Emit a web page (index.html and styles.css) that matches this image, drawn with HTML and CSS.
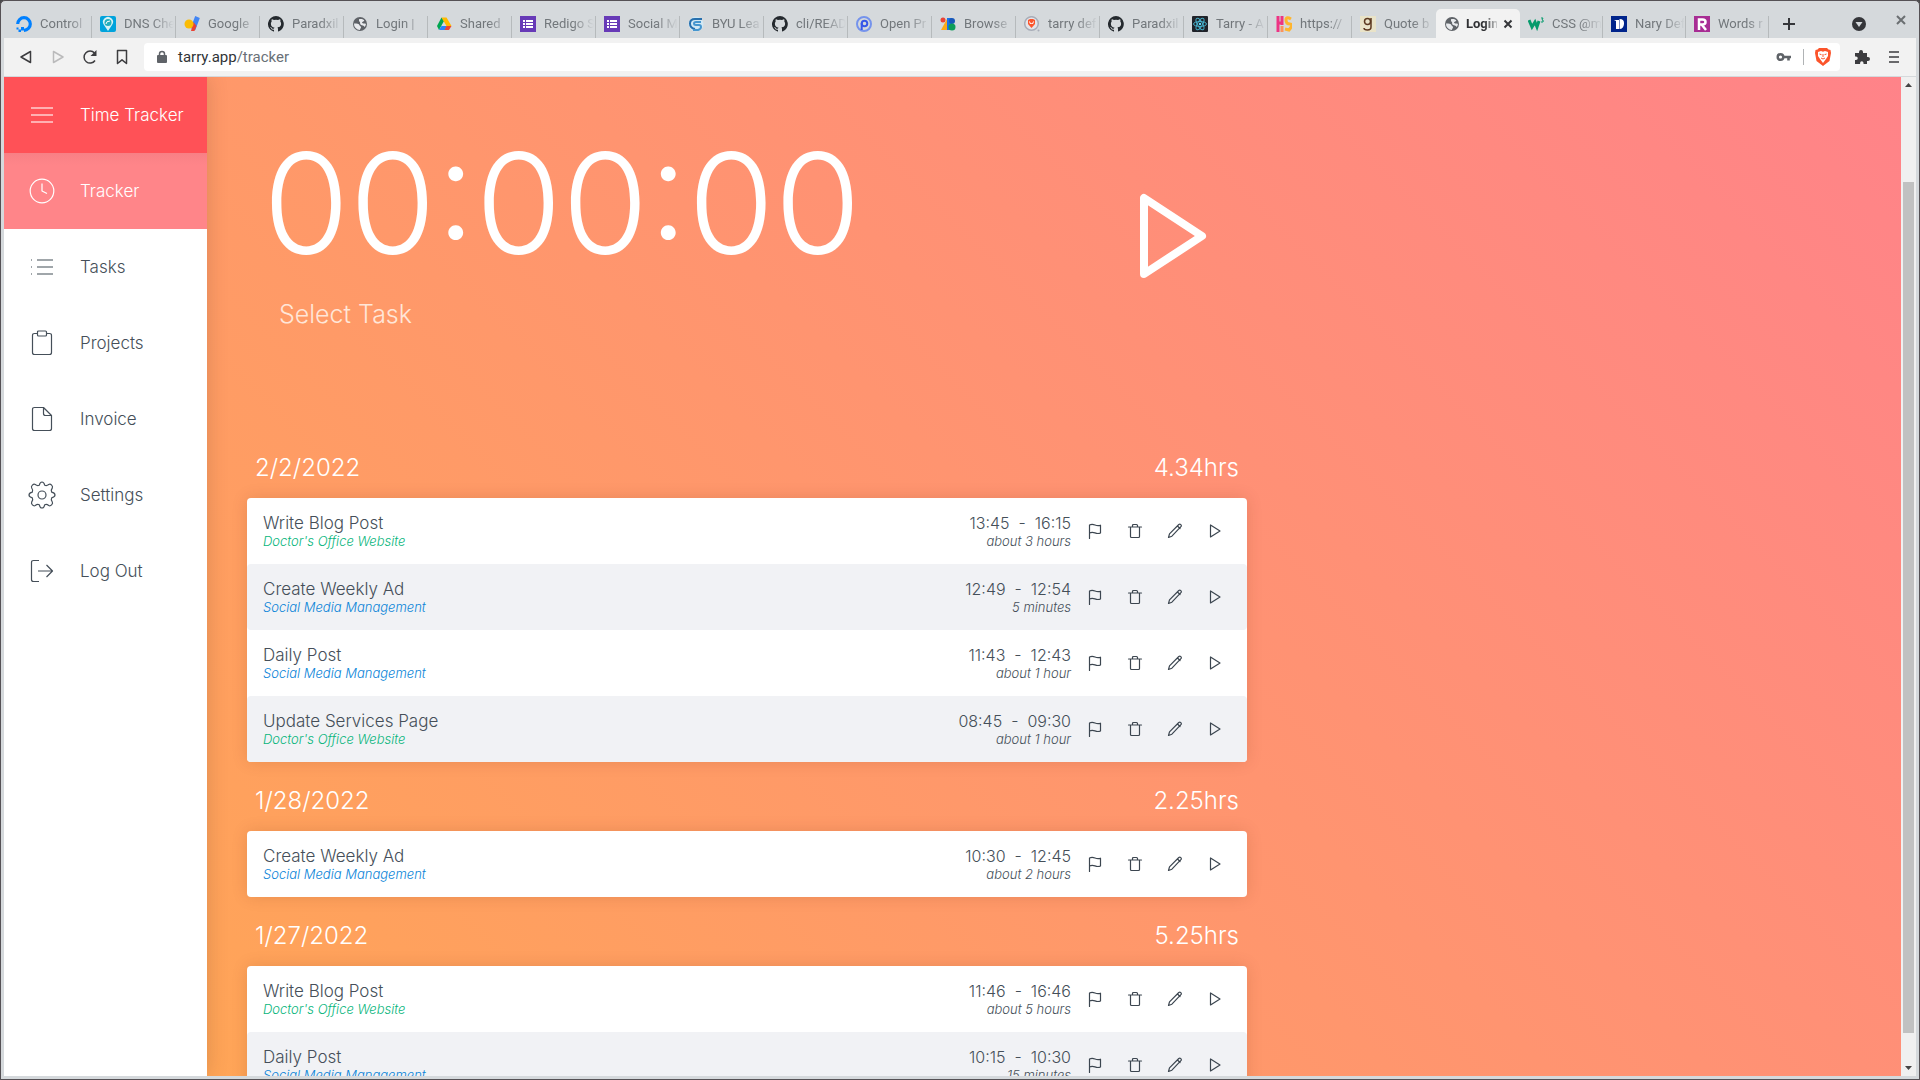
FILE: index.html
```html
<!DOCTYPE html>
<html lang="en">
<head>
<meta charset="utf-8">
<title>Time Tracker</title>
<link rel="stylesheet" href="styles.css">
</head>
<body>
<svg class="sprite" aria-hidden="true">
  <symbol id="flag" viewBox="0 0 16 16"><path d="M2.5 15.5V2Q5 .8 8 2t5.500 .2V10Q11 11 8 9.900T2.500 10"/></symbol>
  <symbol id="trash" viewBox="0 0 16 16"><path d="M1.500 4h13M3.500 4v9.500q0 1 1 1h7q1 0 1-1V4M5.500 4V2.500q0-1 1-1h3q1 0 1 1V4"/></symbol>
  <symbol id="pencil" viewBox="0 0 16 16"><path d="M1.500 14.500l1-3.700L11.800 1.500q1-.8 2 .1 1 1 .1 2.100L4.900 13.200zM10.500 3l2.500 2.500"/></symbol>
  <symbol id="play" viewBox="0 0 16 16"><path d="M3.500 2v12l9.500-6z"/></symbol>
  <symbol id="github" viewBox="0 0 16 16"><path fill="#24292e" d="M8 0a8 8 0 0 0-2.500 15.600c.4.1.5-.2.5-.4v-1.500c-2.200.5-2.700-.9-2.700-.9-.4-.9-.9-1.200-.9-1.200-.7-.5.1-.5.1-.5.8.1 1.200.8 1.200.8.7 1.300 1.900.9 2.300.7.100-.5.3-.9.5-1.100-1.800-.2-3.600-.9-3.600-4 0-.9.300-1.600.8-2.100-.1-.2-.4-1 .1-2.100 0 0 .7-.2 2.200.8a7.600 7.600 0 0 1 4 0c1.500-1 2.200-.8 2.200-.8.4 1.100.2 1.900.1 2.100.5.6.8 1.300.8 2.100 0 3.100-1.900 3.700-3.700 3.900.3.300.6.8.6 1.500v2.200c0 .2.100.5.600.4A8 8 0 0 0 8 0z"/></symbol>
  <symbol id="globe" viewBox="0 0 16 16"><circle cx="8" cy="8" r="7" fill="#5f6368"/><path fill="#e8eaed" d="M2 7.500c3 .1 5 0 5.500 1.800.3 1.200 1.500.5 1.500 1.900 0 1-1 1.300-1 2.800A6 6 0 0 1 2 7.500zM7 3.200c1.500-.4 4-.2 5.300 1.200-.7 1.300-1.800 1-2.300 2-.4 1 2.800 1 4 1.300-.1 1.500-.8 2.600-1.400 3.200-.7-1.700-2.700-1.100-3.800-2.200C7.300 7.200 9 5.500 7 5.400z"/></symbol>
  <symbol id="forms" viewBox="0 0 16 16"><path fill="#673ab7" d="M0 0h16v16H0z"/><path stroke="#fff" stroke-width="2" d="M3 5h2M6 5h7M3 8h2M6 8h7M3 11h2M6 11h7"/></symbol>
</svg>
<div class="window">
  <header class="tabs">
    <div class="tab"><svg viewBox="0 0 16 16"><path fill="none" stroke="#0080ff" stroke-width="3.200" d="M1.700 8A6.300 6.300 0 1 1 8 14.300"/><path fill="#0080ff" d="M5 11h3v3.500H5zM2.500 13.500H5V16H2.500zM.5 11.500h2v2h-2z"/></svg><span>Control</span></div>
    <div class="tab"><svg viewBox="0 0 16 16"><rect width="16" height="16" rx="2" fill="#00a3dc"/><path fill="#d8f2f5" d="M8 15L4 9a5 5 0 1 1 8 0z"/><circle cx="8" cy="6.500" r="3.500" fill="#25aebb"/><path fill="none" stroke="#fff" d="M6 8q0-3 4-3"/></svg><span>DNS Che</span></div>
    <div class="tab"><svg viewBox="0 0 16 16"><path stroke="#4285f4" stroke-width="5" d="M13.500 1L9 13"/><path fill="#ea4335" d="M9.500 6l3 4-2 5H7z"/><circle cx="5" cy="8" r="4.500" fill="#fbbc04"/></svg><span>Google</span></div>
    <div class="tab"><svg><use href="#github"/></svg><span>Paradxil</span></div>
    <div class="tab"><svg><use href="#globe"/></svg><span>Login |</span></div>
    <div class="tab"><svg viewBox="0 0 16 16"><path fill="#00a650" d="M5.500 1.500L1 10l2 4 5-9z"/><path fill="#ffba00" d="M5.500 1.500h5L15.500 10h-5z"/><path fill="#2684fc" d="M3 14l2.500-4H11l-2 4z"/><path fill="#ea4335" d="M10.500 10h5l-2.500 4H8.500z"/></svg><span>Shared</span></div>
    <div class="tab"><svg><use href="#forms"/></svg><span>Redigo S</span></div>
    <div class="tab"><svg><use href="#forms"/></svg><span>Social M</span></div>
    <div class="tab"><svg viewBox="0 0 16 16"><circle cx="8" cy="8" r="7.500" fill="#d2e8f4"/><path fill="none" stroke="#2870ae" stroke-width="2" d="M14 3H7Q2 3 2 7.500T7 13"/><path fill="none" stroke="#4696cf" stroke-width="2" d="M13 6H8Q6 6 6 7.500T8 9h3q2 0 2 2t-3 3H5"/></svg><span>BYU Lea</span></div>
    <div class="tab"><svg><use href="#github"/></svg><span>cli/READ</span></div>
    <div class="tab"><svg viewBox="0 0 16 16"><circle cx="8" cy="8" r="7" fill="none" stroke="#7593ec" stroke-width="2"/><circle cx="8.500" cy="7.500" r="2.800" fill="none" stroke="#3858e8" stroke-width="2"/><path stroke="#3858e8" stroke-width="2" d="M5.700 7v7"/></svg><span>Open Pr</span></div>
    <div class="tab"><svg viewBox="0 0 16 16"><circle cx="3" cy="4" r="2.500" fill="#ea4335"/><path fill="#fbaa19" d="M7 3v11H1z"/><path fill="#1a73e8" d="M7 2h5v12H7z"/><circle cx="12" cy="5" r="3" fill="#1957b8"/><circle cx="12" cy="11" r="3.500" fill="#0d9d58"/></svg><span>Browse</span></div>
    <div class="tab"><svg viewBox="0 0 16 16"><circle cx="7.500" cy="7.500" r="6.800" fill="#e4e4e8" stroke="#a8adb8" stroke-width="1.500"/><path fill="#fb542b" d="M4 4l2-1h3l2 1v4l-3.500 4L4 8z"/><path fill="none" stroke="#fff" d="M5.500 5.500l1 2.500 1-1 1 1 1-2.500"/><circle cx="14.500" cy="14.500" r="1" fill="#a8adb8"/></svg><span>tarry def</span></div>
    <div class="tab"><svg><use href="#github"/></svg><span>Paradxil</span></div>
    <div class="tab"><svg viewBox="0 0 16 16"><rect width="16" height="16" rx="1" fill="#20232a"/><g fill="none" stroke="#46aec9"><ellipse cx="8" cy="8" rx="6.500" ry="2.500"/><ellipse cx="8" cy="8" rx="6.500" ry="2.500" transform="rotate(60 8 8)"/><ellipse cx="8" cy="8" rx="6.500" ry="2.500" transform="rotate(120 8 8)"/></g><circle cx="8" cy="8" r="1.200" fill="#61dafb"/></svg><span>Tarry - A</span></div>
    <div class="tab"><svg viewBox="0 0 16 16"><path stroke="#ed3484" stroke-width="3" d="M2 0v16M6 0v9M2 7h4"/><path stroke="#fc935d" stroke-width="3" d="M6 10v6"/><path fill="none" stroke="#ffb52e" stroke-width="3" d="M15 3Q10 0 10 4t4 4-1 6l-4-1"/></svg><span>https://</span></div>
    <div class="tab"><svg viewBox="0 0 16 16"><path fill="#e9e3c8" d="M0 0h16v16H0z"/><circle cx="7.500" cy="5.500" r="3" fill="none" stroke="#5c3820" stroke-width="1.500"/><path fill="none" stroke="#5c3820" stroke-width="1.500" d="M11 2v9q0 3-3.500 3T4 12"/></svg><span>Quote b</span></div>
    <div class="tab active"><svg><use href="#globe"/></svg><span>Login</span><button class="close" aria-label="Close tab"><svg viewBox="0 0 10 10"><path d="M1.500 1.500l7 7M8.500 1.500l-7 7"/></svg></button></div>
    <div class="tab"><svg viewBox="0 0 16 16"><path fill="none" stroke="#059b6c" stroke-width="3" d="M1 4l3 7 3-5 2 5 2-6"/><path fill="none" stroke="#059b6c" d="M13 2h2l-1 2q2 0 1 2h-2"/></svg><span>CSS @m</span></div>
    <div class="tab"><svg viewBox="0 0 16 16"><path fill="#00248b" d="M0 0h16v16H0z"/><path fill="#fff" d="M3 4h5v9H5V5zM8.500 3q5 0 4.500 5t-4.500 5z"/></svg><span>Nary Def</span></div>
    <div class="tab"><svg viewBox="0 0 16 16"><path fill="#a82d94" d="M0 0h16v16H0z"/><path fill="none" stroke="#fff" stroke-width="2.500" d="M5 14V3.500h3.500q3 0 3 2.500t-3 2.500H5M8 9l4 5"/></svg><span>Words r</span></div>
    <button class="newtab" aria-label="New tab"><svg viewBox="0 0 14 14"><path d="M7 1v12M1 7h12"/></svg></button>
    <button class="tabsearch" aria-label="Search tabs"><svg viewBox="0 0 16 16"><circle cx="8" cy="8" r="7" fill="#35363a"/><path fill="#d5d9dc" d="M4.500 6h7L8 11z"/></svg></button>
    <button class="winclose" aria-label="Close window"><svg viewBox="0 0 12 12"><path d="M2 2l8 8M10 2l-8 8"/></svg></button>
  </header>
  <nav class="toolbar" aria-label="Browser">
    <button aria-label="Back"><svg viewBox="0 0 16 16"><path d="M12.500 2.500v11L3 8z"/></svg></button>
    <button class="off" aria-label="Forward"><svg viewBox="0 0 16 16"><path d="M3.500 2.500v11L13 8z"/></svg></button>
    <button aria-label="Reload"><svg viewBox="0 0 16 16"><path d="M13 11.500A6 6 0 1 1 12.500 4"/><path fill="#3c3c3f" stroke="none" d="M14.500 1v6h-6z"/></svg></button>
    <button aria-label="Bookmark"><svg viewBox="0 0 16 16"><path d="M3.500 1.500h9v13L8 10.800l-4.500 3.700z"/></svg></button>
    <div class="address">
      <svg viewBox="0 0 12 14"><path fill="#5f6368" d="M2 5h8q1 0 1 1v6q0 1-1 1H2q-1 0-1-1V6q0-1 1-1z"/><path fill="none" stroke="#5f6368" stroke-width="1.500" d="M3.500 5.500V4a2.500 2.500 0 0 1 5 0v1.500"/></svg>
      <a href="#tracker">tarry.app<span>/tracker</span></a>
      <button aria-label="Passwords"><svg viewBox="0 0 16 16"><circle cx="4.500" cy="8" r="2.800" stroke-width="2.400" stroke="#5f6368"/><path stroke="#5f6368" stroke-width="2.600" d="M7 8h8M12.500 8v3.500"/></svg></button>
      <i></i>
      <button class="brave" aria-label="Shields"><svg viewBox="0 0 16 18"><path fill="#fb542b" stroke="none" d="M4 0h8l1.500 1.500 2 .5L16 5l-1.500 8L8 18l-6.500-5L0 5l.5-3 2-.5z"/><path fill="#fff" stroke="none" d="M3 4l3-1 2 .7 2-.7 3 1v4l-2 3-3 4-3-4-2-3z"/><path stroke="#fb542b" stroke-width="1" d="M4.500 6l2 .7M11.500 6l-2 .7M8 6v3M6 10l2 1 2-1"/></svg></button>
    </div>
    <button class="ext" aria-label="Extensions"><svg viewBox="0 0 16 16"><path fill="#3c3c3f" stroke="none" d="M1 4h4V3a2 2 0 0 1 4 0v1h4v4h1a2 2 0 0 1 0 4h-1v3H9.500v-1a1.700 1.700 0 0 0-3.400 0v1H1v-4h1a1.500 1.500 0 0 0 0-3.500H1z"/></svg></button>
    <button aria-label="Menu"><svg viewBox="0 0 16 16"><path d="M3 3h10M3 8h10M3 13h10"/></svg></button>
  </nav>
  <div class="page">
    <nav class="sidebar" aria-label="Main">
      <a class="brand" href="#home"><svg viewBox="0 0 28 28"><path stroke="#ffb0b2" stroke-width="2" d="M3 7h22M3 14h22M3 21h22"/></svg>Time Tracker</a>
      <a class="current" href="#tracker"><svg viewBox="0 0 28 28"><circle cx="14" cy="14" r="11.800"/><path d="M14 6.500V14l5 2.500"/></svg>Tracker</a>
      <a href="#tasks"><svg viewBox="0 0 28 28"><path stroke="#a0a6aa" stroke-width="2" d="M9 7h16M9 14h16M9 21h16M3 7h1M3 14h1M3 21h1"/></svg>Tasks</a>
      <a href="#projects"><svg viewBox="0 0 28 28"><path d="M9 4.500H6.500q-2 0-2 2v17q0 2 2 2h15q2 0 2-2v-17q0-2-2-2H19"/><rect x="9.500" y="2" width="9" height="5" rx="1"/></svg>Projects</a>
      <a href="#invoice"><svg viewBox="0 0 28 28"><path d="M15.500 2.500h-9q-2 0-2 2v19q0 2 2 2h15q2 0 2-2V10.500zv6q0 2 2 2h6"/></svg>Invoice</a>
      <a href="#settings"><svg viewBox="0 0 28 28"><circle cx="14" cy="14" r="4"/><path d="M11.300 4.200Q12 1 14 1t2.700 3.200q2 .9 4-.7 1.500-.8 2.900.6t.7 2.900q-1.700 2-.6 4.200Q27 12 27 14t-3.300 2.800q-1.100 2 .6 4.200.8 1.500-.7 2.900t-2.900.6q-2-1.600-4-.7Q16 27 14 27t-2.700-3.200q-2-.9-4 .7-1.500.8-2.900-.6T3.700 21q1.700-2 .6-4.200Q1 16 1 14t3.300-2.800q1.100-2-.6-4.200-.8-1.500.7-2.900t2.900-.6q2 1.600 4 .7z"/></svg>Settings</a>
      <a href="#logout"><svg viewBox="0 0 28 28"><path d="M11 3.500H5.500q-2 0-2 2v17q0 2 2 2H11M10 14h15M18.500 8l6 6-6 6"/></svg>Log Out</a>
    </nav>
    <main class="content">
      <section class="timer">
        <div>
          <time class="clock">00:00:00</time>
          <button class="select">Select Task</button>
        </div>
        <button class="start" aria-label="Start timer"><svg viewBox="0 0 80 96"><path d="M11 10v76l58-38z"/></svg></button>
      </section>
      <section class="day">
        <h2><span>2/2/2022</span><span>4.34hrs</span></h2>
        <ul>
          <li><div class="task">Write Blog Post<em class="green">Doctor's Office Website</em></div><div class="span">13:45 &nbsp;-&nbsp; 16:15<em>about 3 hours</em></div><div class="tools"><button aria-label="Flag"><svg><use href="#flag"/></svg></button><button aria-label="Delete"><svg><use href="#trash"/></svg></button><button aria-label="Edit"><svg><use href="#pencil"/></svg></button><button aria-label="Resume"><svg><use href="#play"/></svg></button></div></li>
          <li><div class="task">Create Weekly Ad<em>Social Media Management</em></div><div class="span">12:49 &nbsp;-&nbsp; 12:54<em>5 minutes</em></div><div class="tools"><button aria-label="Flag"><svg><use href="#flag"/></svg></button><button aria-label="Delete"><svg><use href="#trash"/></svg></button><button aria-label="Edit"><svg><use href="#pencil"/></svg></button><button aria-label="Resume"><svg><use href="#play"/></svg></button></div></li>
          <li><div class="task">Daily Post<em>Social Media Management</em></div><div class="span">11:43 &nbsp;-&nbsp; 12:43<em>about 1 hour</em></div><div class="tools"><button aria-label="Flag"><svg><use href="#flag"/></svg></button><button aria-label="Delete"><svg><use href="#trash"/></svg></button><button aria-label="Edit"><svg><use href="#pencil"/></svg></button><button aria-label="Resume"><svg><use href="#play"/></svg></button></div></li>
          <li><div class="task">Update Services Page<em class="green">Doctor's Office Website</em></div><div class="span">08:45 &nbsp;-&nbsp; 09:30<em>about 1 hour</em></div><div class="tools"><button aria-label="Flag"><svg><use href="#flag"/></svg></button><button aria-label="Delete"><svg><use href="#trash"/></svg></button><button aria-label="Edit"><svg><use href="#pencil"/></svg></button><button aria-label="Resume"><svg><use href="#play"/></svg></button></div></li>
        </ul>
      </section>
      <section class="day">
        <h2><span>1/28/2022</span><span>2.25hrs</span></h2>
        <ul>
          <li><div class="task">Create Weekly Ad<em>Social Media Management</em></div><div class="span">10:30 &nbsp;-&nbsp; 12:45<em>about 2 hours</em></div><div class="tools"><button aria-label="Flag"><svg><use href="#flag"/></svg></button><button aria-label="Delete"><svg><use href="#trash"/></svg></button><button aria-label="Edit"><svg><use href="#pencil"/></svg></button><button aria-label="Resume"><svg><use href="#play"/></svg></button></div></li>
        </ul>
      </section>
      <section class="day">
        <h2><span>1/27/2022</span><span>5.25hrs</span></h2>
        <ul>
          <li><div class="task">Write Blog Post<em class="green">Doctor's Office Website</em></div><div class="span">11:46 &nbsp;-&nbsp; 16:46<em>about 5 hours</em></div><div class="tools"><button aria-label="Flag"><svg><use href="#flag"/></svg></button><button aria-label="Delete"><svg><use href="#trash"/></svg></button><button aria-label="Edit"><svg><use href="#pencil"/></svg></button><button aria-label="Resume"><svg><use href="#play"/></svg></button></div></li>
          <li><div class="task">Daily Post<em>Social Media Management</em></div><div class="span">10:15 &nbsp;-&nbsp; 10:30<em>15 minutes</em></div><div class="tools"><button aria-label="Flag"><svg><use href="#flag"/></svg></button><button aria-label="Delete"><svg><use href="#trash"/></svg></button><button aria-label="Edit"><svg><use href="#pencil"/></svg></button><button aria-label="Resume"><svg><use href="#play"/></svg></button></div></li>
        </ul>
      </section>
    </main>
    <div class="scrollbar" aria-hidden="true">
      <svg viewBox="0 0 15 16"><path d="M4 10h7L7.500 6z"/></svg>
      <div class="track"><div class="thumb"></div></div>
      <svg viewBox="0 0 15 16"><path d="M4 6h7l-3.500 4z"/></svg>
    </div>
  </div>
</div>
</body>
</html>
```

FILE: styles.css
```css
* { box-sizing: border-box; }

body {
  margin: 0;
  height: 100vh;
  overflow: hidden;
  background: #4a4a4c;
  color: #454f59;
  font: 300 17px/20px Inter, "Open Sans", sans-serif;
}

button {
  border: 0;
  padding: 0;
  background: none;
  color: inherit;
  font: inherit;
  display: flex;
  align-items: center;
  justify-content: center;
}

a { color: inherit; text-decoration: none; }
svg { display: block; flex: none; width: 16px; height: 16px; }
.sprite { display: none; }

.window {
  height: 100vh;
  border: 1px solid #555155;
  border-radius: 5px 5px 0 0;
  background: #d5d9dc;
  display: flex;
  flex-direction: column;
  overflow: hidden;
}

/* Tab strip */
.tabs {
  flex: none;
  height: 37px;
  padding: 8px 8px 0 7px;
  display: flex;
  color: #72777b;
  font: 400 13px/20px Roboto, sans-serif;
}

.tab {
  flex: 0 1 84px;
  min-width: 0;
  padding: 0 2px 0 8px;
  display: flex;
  align-items: center;
  gap: 8px;
  background: linear-gradient(#b6babc, #b6babc) right bottom / 1px 22px no-repeat;
}

.tab span {
  flex: 1;
  min-width: 0;
  overflow: hidden;
  white-space: nowrap;
  mask-image: linear-gradient(90deg, #000 28px, transparent 50px);
}

.tab:has(+ .active) { background: none; }
.active ~ .tab { flex-basis: 83px; }
.tab.active { padding-right: 7px; gap: 6px; background: #f2f2f2; border-radius: 5px 5px 0 0; color: #2f3033; font-weight: 700; }
.active span { mask-image: linear-gradient(90deg, #000 18px, transparent 34px); }
.close svg { width: 10px; height: 10px; }
.close svg, .newtab svg, .winclose svg { stroke: #35363a; stroke-width: 2; fill: none; }
.newtab { width: 40px; }
.newtab svg { width: 14px; height: 14px; }
.tabsearch { margin-left: auto; margin-right: 28px; }
.winclose { height: 22px; margin-right: 4px; }
.winclose svg { width: 12px; height: 12px; stroke: #6b6f72; }

/* Toolbar */
.toolbar {
  flex: none;
  height: 39px;
  margin: 0 3px;
  padding: 0 6px;
  display: flex;
  align-items: center;
  background: #f2f2f2;
  border-bottom: 1px solid #d5d9dc;
}

.toolbar button { width: 32px; height: 28px; }
.toolbar button svg { fill: none; stroke: #3c3c3f; stroke-width: 1.5; stroke-linejoin: round; }
.toolbar .off { opacity: 0.3; }

.address {
  flex: 1;
  height: 28px;
  margin-left: 6px;
  padding: 0 4px 0 12px;
  display: flex;
  align-items: center;
  gap: 10px;
  border-radius: 4px;
  background: #fff;
  color: #303437;
  font: 400 15px/20px Roboto, sans-serif;
}

.address > svg { width: 12px; height: 14px; }
.address a { flex: 1; }
.address a span { color: #697077; }
.address i { width: 1px; height: 16px; background: #b0b3b5; }
.toolbar .address button { width: 18px; }
.toolbar .brave svg { height: 18px; }
.toolbar .address .brave { margin-right: 4px; }
.toolbar .ext { margin-left: 6px; }

/* Page */
.page {
  flex: 1;
  min-height: 0;
  margin: 0 3px 3px;
  display: grid;
  grid-template-columns: 203px 1fr 15px;
}

.sidebar {
  position: relative;
  z-index: 1;
  background: #fff;
  box-shadow: 0 0 20px rgba(80, 50, 30, 0.2);
  clip-path: inset(0 -30px 0 0);
}

.sidebar a {
  height: 76px;
  padding-left: 24px;
  display: flex;
  align-items: center;
  gap: 24px;
}

.sidebar svg { width: 28px; height: 28px; fill: none; stroke: currentColor; stroke-width: 1.2; stroke-linejoin: round; }
.sidebar .brand { background: #ff5157; color: #fff; }
.sidebar .current { background: linear-gradient(#f88085, #ff8589 12px); color: #fff; }

.content {
  min-width: 0;
  overflow: hidden;
  padding: 0 40px;
  background: linear-gradient(45deg, #ffa557, #ff8389);
}

.timer, .day { max-width: 1000px; }
.timer { height: 352px; padding: 54px 34px 0 16px; display: flex; justify-content: space-between; color: #fff; }
.clock { display: block; font-size: 140px; font-weight: 300; line-height: 144px; }
.select { margin: 25px 0 0 16px; font-size: 25px; line-height: 28px; color: #ffe6d8; }
.start { width: 80px; height: 96px; margin: 57px 0 0; }
.start svg { width: 80px; height: 96px; fill: none; stroke: #fff; stroke-width: 8; stroke-linejoin: round; }

.day h2 {
  height: 69px;
  margin: 0;
  padding: 8px 8px 0;
  display: flex;
  align-items: center;
  justify-content: space-between;
  color: #fff;
  font-size: 24px;
  font-weight: 300;
}

.day ul { margin: 0; padding: 0; list-style: none; background: #fff; border-radius: 4px; box-shadow: 0 0 16px rgba(100, 40, 10, 0.15); }
.day li { height: 66px; padding: 0 12px 0 16px; display: flex; align-items: center; border-radius: 4px; }
.day li:nth-child(even) { background: #f1f2f5; }
.task { flex: 1; }
.day em { display: block; font-size: 13px; line-height: 16px; }
.task em { color: #0a84d8; }
.task .green { color: #07b57c; }
.span { padding-right: 4px; text-align: right; font-size: 16px; }
.tools { display: flex; }
.tools button { width: 40px; height: 40px; }
.tools svg { fill: none; stroke: #3c4650; stroke-width: 1.2; stroke-linejoin: round; stroke-linecap: round; }

.scrollbar { display: flex; flex-direction: column; background: #f0f0f0; }
.scrollbar svg { width: 15px; fill: #444; }
.track { flex: 1; padding: 0 2px; display: flow-root; }
.thumb { height: 88%; margin-top: 89px; background: #c1c1c1; }
```
